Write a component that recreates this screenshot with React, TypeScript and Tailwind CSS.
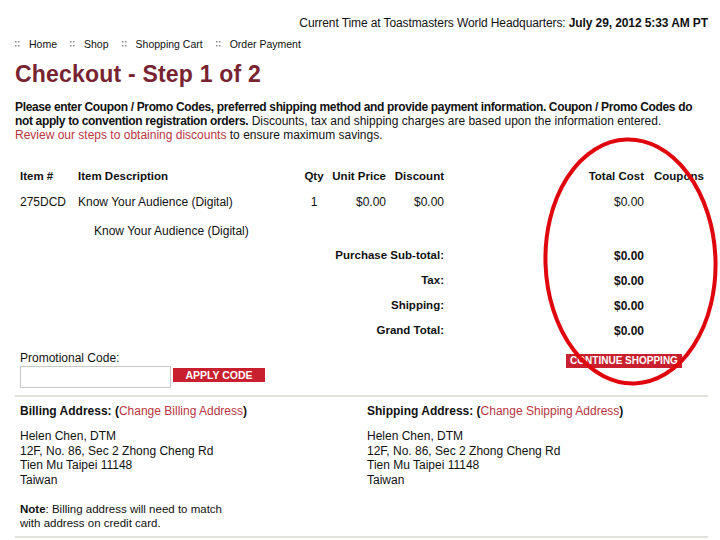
import React from 'react'

function Dots() {
  return (
    <svg width="5" height="6" viewBox="0 0 5 6" className="shrink-0">
      <rect x="0" y="0" width="1.5" height="1.5" fill="#8a8a8a" />
      <rect x="3" y="0" width="1.5" height="1.5" fill="#8a8a8a" />
      <rect x="0" y="4" width="1.5" height="1.5" fill="#8a8a8a" />
      <rect x="3" y="4" width="1.5" height="1.5" fill="#8a8a8a" />
    </svg>
  )
}

const crumbs = ['Home', 'Shop', 'Shopping Cart', 'Order Payment']

const totals = [
  { label: 'Purchase Sub-total:', value: '$0.00' },
  { label: 'Tax:', value: '$0.00' },
  { label: 'Shipping:', value: '$0.00' },
  { label: 'Grand Total:', value: '$0.00' },
]

const cols = 'grid grid-cols-[58px_220px_32px_62px_58px_138px_62px_60px] items-center'

function Address({ title, link }: { title: string; link: string }) {
  return (
    <div>
      <div className="text-[12px] leading-[15px]">
        <b>{title}:</b> <b>(</b>
        <span className="text-[#b8343f]">{link}</span>
        <b>)</b>
      </div>
      <div className="mt-[10px] text-[12px] leading-[14.5px]">
        <div>Helen Chen, DTM</div>
        <div>12F, No. 86, Sec 2 Zhong Cheng Rd</div>
        <div>Tien Mu Taipei 11148</div>
        <div>Taiwan</div>
      </div>
    </div>
  )
}

export default function App() {
  return (
    <div className="relative w-[720px] h-[540px] overflow-hidden bg-white text-[#111] font-['Liberation_Sans',Arial,sans-serif]">
      <div className="pt-[16px] pr-[12px] text-right text-[12px] leading-[15px] tracking-[-0.1px]">
        Current Time at Toastmasters World Headquarters: <b>July 29, 2012 5:33 AM PT</b>
      </div>

      <div className="mt-[7px] flex items-center pl-[15px] text-[10.5px] leading-[12px]">
        {crumbs.map((c) => (
          <div key={c} className="flex items-center mr-[13px]">
            <Dots />
            <span className="ml-[9px]">{c}</span>
          </div>
        ))}
      </div>

      <h1 className="mt-[11px] pl-[15px] text-[23px] leading-[26px] font-bold tracking-[0.2px] text-[#772330]">
        Checkout - Step 1 of 2
      </h1>

      <p className="mt-[13px] pl-[15px] text-[12px] leading-[14px] whitespace-nowrap">
        <b className="tracking-[-0.35px]">
          Please enter Coupon / Promo Codes, preferred shipping method and provide payment information. Coupon / Promo Codes do
          <br />
          not apply to convention registration orders.
        </b>{' '}
        Discounts, tax and shipping charges are based upon the information entered.
        <br />
        <span className="text-[#b8343f]">Review our steps to obtaining discounts</span> to ensure maximum savings.
      </p>

      <div className="mt-[22px] ml-[20px]">
        <div className={`${cols} h-[25px] text-[11.5px] font-bold`}>
          <div>Item #</div>
          <div>Item Description</div>
          <div className="text-center">Qty</div>
          <div className="text-right pr-[6px]">Unit Price</div>
          <div className="text-right pr-[6px]">Discount</div>
          <div />
          <div className="text-right pr-[6px]">Total Cost</div>
          <div className="pl-[4px]">Coupons</div>
        </div>
        <div className={`${cols} h-[25px] text-[12px]`}>
          <div>275DCD</div>
          <div>Know Your Audience (Digital)</div>
          <div className="text-center">1</div>
          <div className="text-right pr-[6px]">$0.00</div>
          <div className="text-right pr-[6px]">$0.00</div>
          <div />
          <div className="text-right pr-[6px]">$0.00</div>
          <div />
        </div>
        <div className={`${cols} h-[29px] text-[12px]`}>
          <div />
          <div className="col-span-3 pl-[16px] pt-[4px]">Know Your Audience (Digital)</div>
        </div>
        {totals.map((t) => (
          <div key={t.label} className={`${cols} h-[25px] font-bold`}>
            <div className="col-span-5 text-right pr-[6px] text-[11.5px]">{t.label}</div>
            <div />
            <div className="text-right pr-[6px] text-[12px]">{t.value}</div>
          </div>
        ))}
      </div>

      <div className="mt-[8px] ml-[20px] mr-[38px] flex justify-between">
        <div>
          <div className="text-[12px] leading-[15px]">Promotional Code:</div>
          <div className="flex items-start">
            <div className="w-[151px] h-[22px] border border-[#c8c8c8]" />
            <button className="ml-[2px] mt-[2px] w-[92px] h-[14px] bg-[#c8202f] text-white text-[10.5px] leading-[14px] font-bold">
              APPLY CODE
            </button>
          </div>
        </div>
        <button className="mt-[3px] w-[116px] h-[14px] bg-[#c8202f] text-white text-[10px] leading-[14px] font-bold">
          CONTINUE SHOPPING
        </button>
      </div>

      <div className="mt-[7px] mx-[15px] mr-[12px] h-[2px] bg-[#e2e2dc]" />

      <div className="mt-[7px] ml-[20px] grid grid-cols-[347px_1fr]">
        <Address title="Billing Address" link="Change Billing Address" />
        <Address title="Shipping Address" link="Change Shipping Address" />
      </div>

      <div className="mt-[15px] ml-[20px] text-[11.5px] leading-[14px]">
        <b>Note</b>: Billing address will need to match
        <br />
        with address on credit card.
      </div>

      <div className="mt-[6px] mx-[15px] mr-[12px] h-[2px] bg-[#e2e2dc]" />

      <svg className="absolute left-0 top-0 pointer-events-none" width="720" height="540">
        <ellipse
          cx="630.5"
          cy="261.5"
          rx="85"
          ry="122"
          fill="none"
          stroke="#e0060e"
          strokeWidth="4"
          transform="rotate(-2 630.5 261.5)"
        />
      </svg>
    </div>
  )
}
